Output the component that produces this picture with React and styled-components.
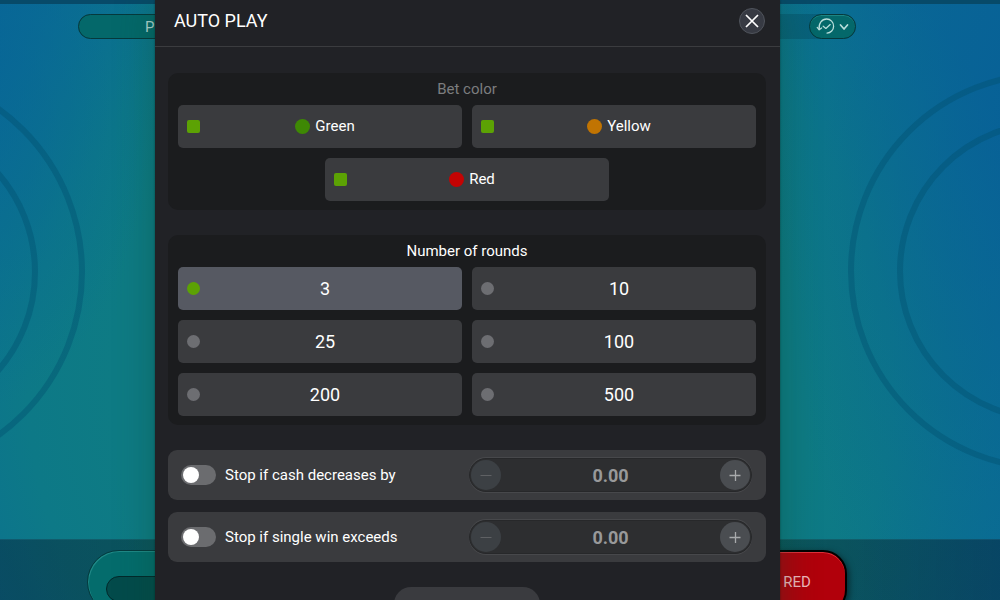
import React, { useState } from "react";
import styled, { createGlobalStyle, css } from "styled-components";

const Global = createGlobalStyle`
  *, *::before, *::after { box-sizing: border-box; }
  body { margin: 0; background: #0a6c90; font-family: Roboto, "Liberation Sans", sans-serif; font-size: 15px; color: #fff; }
  button, input { font: inherit; color: inherit; }
`;

const Page = styled.div`
  position: relative;
  height: 100vh;
  overflow: hidden;
`;

const Game = styled.div`
  position: relative;
  display: flex;
  flex-direction: column;
  height: 100%;
  background:
    radial-gradient(ellipse 26% 100% at 102% 18%, rgba(7, 94, 152, 0.8), rgba(7, 96, 150, 0)),
    radial-gradient(ellipse 18% 60% at -2% 8%, rgba(7, 100, 152, 0.8), rgba(7, 100, 152, 0)),
    radial-gradient(ellipse 60% 100% at 46% 64%, #0e7b84 58%, #0d7987 72%, #0b7190 90%, #0a6c93 100%);
`;

const Rings = styled.svg`
  position: absolute;
  top: 0;
  width: 160px;
  height: 600px;
  ${(p) => (p.$side === "left" ? "left: 0;" : "right: 0;")}
  fill: none;
  stroke: rgba(3, 82, 112, 0.42);
  stroke-width: 6;
`;

const TopStrip = styled.div`
  height: 4px;
  background: #074a69;
`;

const TopBar = styled.header`
  display: flex;
  justify-content: space-between;
  width: 778px;
  max-width: 100%;
  height: 25px;
  margin-top: 10px;
  align-self: center;
  border-radius: 13px;
  background: rgba(0, 40, 60, 0.22);
`;

const Centered = styled.div`
  display: flex;
  flex-direction: column;
  flex: 1;
  padding-right: 66px;
`;

const GameTitle = styled.div`
  width: 160px;
  padding-left: 66px;
  border: 1px solid #06393c;
  border-radius: 13px;
  background: #04686a;
  color: #b4d6d2;
  line-height: 24px;
`;

const HistoryButton = styled.button`
  display: flex;
  align-items: center;
  justify-content: space-between;
  width: 47px;
  padding: 0 6px;
  border: 1px solid #06393c;
  border-radius: 13px;
  background: #04686a;
  box-shadow: inset 0 1px 0 #1c8584;
  color: #b9dedb;
  svg { fill: none; stroke: currentColor; stroke-linecap: round; stroke-linejoin: round; }
`;

const BottomBar = styled.footer`
  position: relative;
  height: 61px;
  padding: 10px 66px 0 0;
  border-top: 1px solid rgba(60, 160, 180, 0.15);
  background: linear-gradient(90deg, rgba(6, 32, 54, 0.48), rgba(8, 40, 45, 0.46) 20%, rgba(8, 40, 45, 0.46) 80%, rgba(6, 32, 54, 0.5));
`;

const Controls = styled.div`
  display: flex;
  justify-content: space-between;
  width: 760px;
  max-width: 100%;
  margin: 0 auto;
`;

const BetBox = styled.div`
  width: 200px;
  height: 64px;
  padding: 25px 18px 0;
  border: 1px solid #053a3e;
  border-radius: 32px;
  background: #046c6c;
  box-shadow: inset 1px 1px 0 #1f8886;
`;

const BetValue = styled.div`
  height: 26px;
  border: 1px solid #02282a;
  border-radius: 13px;
  background: #034b4b;
`;

const RedButton = styled.button`
  width: 100px;
  height: 64px;
  padding: 0;
  border: 2px solid #000;
  border-radius: 24px;
  background: #b1000b;
  box-shadow: inset 0 1px 0 #e0303a, 2px 2px 6px rgba(0, 0, 0, 0.5);
  color: #f0b8bc;
`;

const Overlay = styled.div`
  position: absolute;
  inset: 0;
  display: flex;
  justify-content: center;
  padding-right: 65px;
`;

const Modal = styled.section`
  width: 100%;
  max-width: 625px;
  height: max-content;
  min-height: 100%;
  background: #212226;
  box-shadow: 0 0 36px rgba(10, 70, 45, 0.4), 0 0 2px rgba(0, 0, 0, 0.4);
`;

const ModalHeader = styled.header`
  display: flex;
  align-items: center;
  justify-content: space-between;
  height: 47px;
  padding: 0 15px 5px 19px;
  border-bottom: 1px solid #3b3c3f;
`;

const ModalTitle = styled.h1`
  margin: 0;
  font-size: 18px;
  font-weight: 400;
  line-height: 24px;
`;

const CloseButton = styled.button`
  display: grid;
  place-items: center;
  width: 26px;
  height: 26px;
  padding: 0;
  border: 1px solid #50545c;
  border-radius: 50%;
  background: #373a43;
`;

const ModalBody = styled.form`
  display: flex;
  flex-direction: column;
  gap: 25px;
  padding: 26px 14px 20px 13px;
`;

const Panel = styled.div`
  padding: 0 10px 9px;
  border-radius: 10px;
  background: #1b1c1e;
`;

const PanelTitle = styled.h2`
  margin: 0;
  font-size: 15px;
  font-weight: 400;
  line-height: 32px;
  text-align: center;
  color: ${(p) => (p.$muted ? "#7c7d7f" : "#fff")};
`;

const Options = styled.div`
  display: flex;
  flex-wrap: wrap;
  justify-content: center;
  gap: 10px;
`;

const Option = styled.label`
  display: flex;
  align-items: center;
  flex: 0 0 calc(50% - 5px);
  height: 43px;
  padding: 0 12px 1px 9px;
  border-radius: 5px;
  background: ${(p) => (p.$selected ? "#565962" : "#3a3b3e")};
  font-size: ${(p) => (p.$large ? "18px" : "15px")};
`;

const mark = css`
  appearance: none;
  flex: none;
  width: 13px;
  height: 13px;
  margin: 0;
  background: #6d6e72;
  &:checked { background: #5ca204; }
`;

const CheckMark = styled.input`
  ${mark}
  border-radius: 2px;
`;

const RadioMark = styled.input`
  ${mark}
  border-radius: 50%;
`;

const OptionText = styled.span`
  display: flex;
  flex: 1;
  align-items: center;
  justify-content: center;
  gap: 5px;
`;

const Dot = styled.span`
  width: 15px;
  height: 15px;
  border-radius: 50%;
  background: ${(p) => p.$color};
`;

const Limits = styled.div`
  display: flex;
  flex-direction: column;
  gap: 12px;
`;

const LimitRow = styled.div`
  display: flex;
  align-items: center;
  justify-content: space-between;
  height: 50px;
  padding: 0 14px 0 13px;
  border-radius: 9px;
  background: #3a3b3e;
`;

const SwitchLabel = styled.label`
  display: flex;
  align-items: center;
  gap: 9px;
`;

const Switch = styled.input`
  appearance: none;
  width: 35px;
  height: 20px;
  margin: 0;
  padding: 2px;
  border-radius: 10px;
  background: #6b6c6f;
  &::before {
    content: "";
    display: block;
    width: 16px;
    height: 16px;
    border-radius: 50%;
    background: #fff;
  }
  &:checked { background: #5ca204; }
  &:checked::before { margin-left: auto; }
`;

const Stepper = styled.div`
  display: flex;
  align-items: center;
  width: 283px;
  height: 34px;
  padding: 0 1px;
  border: 1px solid #27282a;
  border-radius: 17px;
  background: #2d2e30;
  box-shadow: 0 1px 0 #47484b, 0 -1px 0 #47484b;
`;

const StepButton = styled.button`
  display: grid;
  place-items: center;
  flex: none;
  width: 30px;
  height: 30px;
  padding: 0;
  border: 0;
  border-radius: 50%;
  background: #4a4d51;
  color: #a8aaac;
  &:disabled { background: #3c4044; color: #5f6164; }
`;

const Amount = styled.input`
  flex: 1;
  min-width: 0;
  padding: 0;
  border: 0;
  background: none;
  color: #98999a;
  font-size: 18px;
  font-weight: 700;
  text-align: center;
`;

const StartButton = styled.button`
  align-self: center;
  width: 146px;
  height: 48px;
  border: 0;
  border-radius: 17px;
  background: #3a3b3f;
`;

const Line = styled.svg`
  fill: none;
  stroke: currentColor;
  stroke-width: ${(p) => p.$w || 1};
`;

const COLORS = [
  { name: "Green", color: "#3e8804" },
  { name: "Yellow", color: "#c17402" },
  { name: "Red", color: "#c40303" },
];

const ROUNDS = [3, 10, 25, 100, 200, 500];

function Limit({ label }) {
  const [amount, setAmount] = useState(0);
  return (
    <LimitRow>
      <SwitchLabel>
        <Switch type="checkbox" role="switch" />
        {label}
      </SwitchLabel>
      <Stepper>
        <StepButton type="button" aria-label="Decrease" disabled={amount === 0} onClick={() => setAmount(amount - 1)}>
          <Line width="12" height="12"><path d="M0.5 6.5h11" /></Line>
        </StepButton>
        <Amount aria-label={label} value={amount.toFixed(2)} readOnly />
        <StepButton type="button" aria-label="Increase" onClick={() => setAmount(amount + 1)}>
          <Line width="12" height="12" $w={1.3}><path d="M0.5 6.5h11M6.5 1v11" /></Line>
        </StepButton>
      </Stepper>
    </LimitRow>
  );
}

export default function App() {
  const [bets, setBets] = useState(["Green", "Yellow", "Red"]);
  const [rounds, setRounds] = useState(3);
  const toggle = (name) =>
    setBets(bets.includes(name) ? bets.filter((b) => b !== name) : [...bets, name]);

  return (
    <Page>
      <Global />
      <Game>
        <Rings $side="left" viewBox="0 0 160 600">
          <circle cx="-119" cy="272" r="201" />
          <circle cx="-115" cy="272" r="150" />
        </Rings>
        <Rings $side="right" viewBox="0 0 160 600">
          <circle cx="208" cy="271" r="197" />
          <circle cx="208" cy="271" r="148" />
        </Rings>
        <TopStrip />
        <Centered>
          <TopBar>
            <GameTitle>P</GameTitle>
            <HistoryButton type="button" aria-label="Round history">
              <svg width="20" height="19" viewBox="0 0 20 19" strokeWidth="1.3">
                <path d="M3.2 12.2C2.4 6.2 6 2 10.6 2c4 0 7 3.2 7 7.2 0 3.8-2.9 6.8-6.6 6.9" />
                <path d="M1.2 10.4l2 2.3 2.4-1.7M7.2 9.2l2.7 2.2 4.3-3.8" />
              </svg>
              <svg width="10" height="10" viewBox="0 0 10 10" strokeWidth="1.7">
                <path d="M1.5 3l3.5 4L8.5 3" />
              </svg>
            </HistoryButton>
          </TopBar>
        </Centered>
        <BottomBar>
          <Controls>
            <BetBox><BetValue /></BetBox>
            <RedButton type="button">RED</RedButton>
          </Controls>
        </BottomBar>
      </Game>
      <Overlay>
        <Modal role="dialog" aria-labelledby="autoplay-title">
          <ModalHeader>
            <ModalTitle id="autoplay-title">AUTO PLAY</ModalTitle>
            <CloseButton type="button" aria-label="Close">
              <Line width="14" height="14" $w={1.7}><path d="M1 1l12 12M13 1L1 13" /></Line>
            </CloseButton>
          </ModalHeader>
          <ModalBody>
            <Panel role="group" aria-labelledby="bet-title">
              <PanelTitle id="bet-title" $muted>Bet color</PanelTitle>
              <Options>
                {COLORS.map(({ name, color }) => (
                  <Option key={name}>
                    <CheckMark type="checkbox" checked={bets.includes(name)} onChange={() => toggle(name)} />
                    <OptionText><Dot $color={color} />{name}</OptionText>
                  </Option>
                ))}
              </Options>
            </Panel>
            <Panel role="radiogroup" aria-labelledby="rounds-title">
              <PanelTitle id="rounds-title">Number of rounds</PanelTitle>
              <Options>
                {ROUNDS.map((n) => (
                  <Option key={n} $large $selected={rounds === n}>
                    <RadioMark type="radio" name="rounds" checked={rounds === n} onChange={() => setRounds(n)} />
                    <OptionText>{n}</OptionText>
                  </Option>
                ))}
              </Options>
            </Panel>
            <Limits>
              <Limit label="Stop if cash decreases by" />
              <Limit label="Stop if single win exceeds" />
            </Limits>
            <StartButton type="button" aria-label="Start auto play" />
          </ModalBody>
        </Modal>
      </Overlay>
    </Page>
  );
}
